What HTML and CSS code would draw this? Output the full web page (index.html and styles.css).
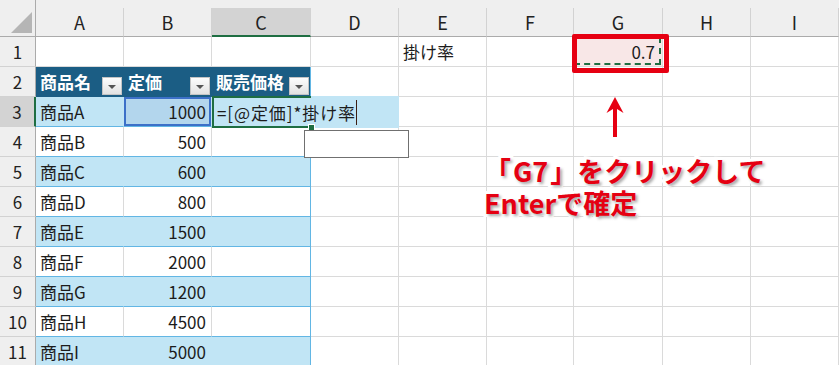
FILE: index.html
```html
<!DOCTYPE html>
<html lang="ja">
<head>
  <meta charset="UTF-8">
  <title>販売価格の計算</title>
  <link rel="stylesheet" href="styles.css">
</head>
<body>
  <div class="sheet">
    <!-- 列見出し -->
    <div class="corner"><span class="tri"></span></div>
    <div class="ch">A</div>
    <div class="ch">B</div>
    <div class="ch on">C</div>
    <div class="ch">D</div>
    <div class="ch">E</div>
    <div class="ch">F</div>
    <div class="ch">G</div>
    <div class="ch">H</div>
    <div class="ch">I</div>

    <!-- 1行目 -->
    <div class="rh">1</div>
    <div class="c"></div>
    <div class="c"></div>
    <div class="c"></div>
    <div class="c"></div>
    <div class="c">掛け率</div>
    <div class="c"></div>
    <div class="c num g1">0.7<span class="mark"></span></div>
    <div class="c"></div>
    <div class="c"></div>

    <!-- 2行目 テーブル見出し -->
    <div class="rh">2</div>
    <div class="c th">商品名<span class="dd"></span></div>
    <div class="c th">定価<span class="dd"></span></div>
    <div class="c th last">販売価格<span class="dd"></span></div>
    <div class="c"></div>
    <div class="c"></div>
    <div class="c"></div>
    <div class="c"></div>
    <div class="c"></div>
    <div class="c"></div>

    <!-- 3行目 入力中 -->
    <div class="rh on">3</div>
    <div class="c t band">商品A</div>
    <div class="c t band num ref">1000</div>
    <div class="c t band last edit">
      <div class="editor">=[@定価]*掛け率<span class="caret"></span></div>
    </div>
    <div class="c"></div>
    <div class="c"></div>
    <div class="c"></div>
    <div class="c"></div>
    <div class="c"></div>
    <div class="c"></div>

    <div class="rh">4</div>
    <div class="c t">商品B</div>
    <div class="c t num">500</div>
    <div class="c t last"></div>
    <div class="c"></div><div class="c"></div><div class="c"></div><div class="c"></div><div class="c"></div><div class="c"></div>

    <div class="rh">5</div>
    <div class="c t band">商品C</div>
    <div class="c t band num">600</div>
    <div class="c t band last"></div>
    <div class="c"></div><div class="c"></div><div class="c"></div><div class="c"></div><div class="c"></div><div class="c"></div>

    <div class="rh">6</div>
    <div class="c t">商品D</div>
    <div class="c t num">800</div>
    <div class="c t last"></div>
    <div class="c"></div><div class="c"></div><div class="c"></div><div class="c"></div><div class="c"></div><div class="c"></div>

    <div class="rh">7</div>
    <div class="c t band">商品E</div>
    <div class="c t band num">1500</div>
    <div class="c t band last"></div>
    <div class="c"></div><div class="c"></div><div class="c"></div><div class="c"></div><div class="c"></div><div class="c"></div>

    <div class="rh">8</div>
    <div class="c t">商品F</div>
    <div class="c t num">2000</div>
    <div class="c t last"></div>
    <div class="c"></div><div class="c"></div><div class="c"></div><div class="c"></div><div class="c"></div><div class="c"></div>

    <div class="rh">9</div>
    <div class="c t band">商品G</div>
    <div class="c t band num">1200</div>
    <div class="c t band last"></div>
    <div class="c"></div><div class="c"></div><div class="c"></div><div class="c"></div><div class="c"></div><div class="c"></div>

    <div class="rh">10</div>
    <div class="c t">商品H</div>
    <div class="c t num">4500</div>
    <div class="c t last"></div>
    <div class="c"></div><div class="c"></div><div class="c"></div><div class="c"></div><div class="c"></div><div class="c"></div>

    <div class="rh">11</div>
    <div class="c t band">商品I</div>
    <div class="c t band num">5000</div>
    <div class="c t band last"></div>
    <div class="c"></div><div class="c"></div><div class="c"></div><div class="c"></div><div class="c"></div><div class="c"></div>

    <!-- 入力候補の枠 -->
    <div class="tip"></div>

    <!-- 矢印と説明 -->
    <svg class="arrow" width="22" height="44" viewBox="0 0 22 44">
      <polygon points="11,2 19.5,18 13,14 13,42 9,42 9,14 2.5,18" fill="#e60012"/>
    </svg>
    <div class="note">
      <div class="line">「<span class="key">G7</span>」をクリックして</div>
      <div class="line">Enterで確定</div>
    </div>
  </div>
</body>
</html>
```

FILE: styles.css
```css
html, body { margin: 0; }
body {
  overflow: hidden;
  background: #fff;
  font-family: "Noto Sans CJK JP", "Noto Sans", sans-serif;
}

.sheet {
  position: relative;
  display: grid;
  grid-template-columns: 36px 88px 88px 99px 88px 88px 87px 89px 88px 88px;
  grid-template-rows: 37px repeat(11, 30px);
  background: #efefef;
  font-size: 17px;
  color: #1c1c1c;
}
.sheet > div { box-sizing: border-box; }

/* 見出し */
.corner {
  position: relative;
  border-right: 1px solid #ababab;
  border-bottom: 1px solid #ababab;
}
.corner .tri {
  position: absolute;
  right: 3px;
  bottom: 3px;
  border-left: 21px solid transparent;
  border-bottom: 21px solid #b5b5b5;
}
.ch {
  margin-top: 8px;
  display: flex;
  align-items: center;
  justify-content: center;
  border-right: 1px solid #d2d2d2;
  border-bottom: 1px solid #ababab;
  font-size: 18px;
  color: #222;
}
.ch.on { background: #d3d3d3; border-bottom: 2px solid #1e6e42; }
.rh {
  display: flex;
  align-items: center;
  justify-content: center;
  border-right: 1px solid #ababab;
  border-bottom: 1px solid #d2d2d2;
  color: #222;
}
.rh.on { background: #d3d3d3; border-right: 2px solid #1e6e42; }

/* セル */
.c {
  display: flex;
  align-items: center;
  padding: 0 4px;
  white-space: nowrap;
  background: #fff;
  border-right: 1px solid #dadada;
  border-bottom: 1px solid #dadada;
}
.num { justify-content: flex-end; padding-right: 5px; }

/* テーブル */
.th {
  position: relative;
  background: #1b5d84;
  color: #fff;
  font-weight: 700;
  border-right-color: #1b5d84;
  border-bottom-color: #1b5d84;
}
.th.last { border-right-color: #62b6e4; }
.dd {
  position: absolute;
  right: 1px;
  bottom: 1px;
  width: 20px;
  height: 18px;
  box-sizing: border-box;
  border: 1px solid #c4c4c4;
  background: linear-gradient(#fdfdfd, #e2e2e2);
}
.dd::after {
  content: "";
  position: absolute;
  left: 5px;
  top: 7px;
  border-left: 4px solid transparent;
  border-right: 4px solid transparent;
  border-top: 4px solid #555;
}
.t { border-bottom-color: #62b6e4; }
.band { background: #c1e5f5; border-right-color: #c1e5f5; }
.t.last { border-right-color: #62b6e4; }
.ref { background: #b3d6ed; box-shadow: inset 0 0 0 2px #3c70c8; }

/* 編集中のセル */
.edit { position: relative; }
.editor {
  position: absolute;
  left: 0;
  top: -1px;
  width: 187px;
  height: 32px;
  box-sizing: border-box;
  padding-left: 5px;
  display: flex;
  align-items: center;
  letter-spacing: 0.9px;
  background: #c1e5f5;
  z-index: 2;
}
.editor::before {
  content: "";
  position: absolute;
  left: 0;
  top: 0;
  width: 99px;
  height: 32px;
  box-sizing: border-box;
  border: 2px solid #1e6e42;
  border-right: 0;
}
.editor::after {
  content: "";
  position: absolute;
  left: 96px;
  top: 28px;
  width: 5px;
  height: 5px;
  background: #1e6e42;
  border: 1px solid #fff;
}
.caret {
  display: inline-block;
  width: 1px;
  height: 25px;
  background: #3b1d12;
}

/* G1 */
.g1 { position: relative; background: #f8e7e7; padding-right: 7px; }
.g1::before {
  content: "";
  position: absolute;
  top: 0;
  left: 0;
  right: 1px;
  bottom: 1px;
  border: 2px dashed #1e6e42;
}
.mark {
  position: absolute;
  left: -2px;
  top: -3px;
  right: -7px;
  bottom: -7px;
  border: 5px solid #e60012;
  border-radius: 2px;
  z-index: 2;
}

.tip {
  position: absolute;
  left: 304px;
  top: 130px;
  width: 105px;
  height: 28px;
  border: 1px solid #707070;
  background: #fff;
  z-index: 3;
}

.arrow {
  position: absolute;
  left: 604px;
  top: 95px;
}
.note {
  position: absolute;
  left: 484px;
  top: 155px;
  font-size: 27px;
  font-weight: 700;
  color: #e50012;
  white-space: nowrap;
  -webkit-text-stroke: 6px #fff;
  paint-order: stroke fill;
  text-shadow: 2px 2px 3px rgba(0, 0, 0, 0.35);
}
.note .line { height: 32px; line-height: 32px; }
.note .key { margin: 0 2px; }
```
